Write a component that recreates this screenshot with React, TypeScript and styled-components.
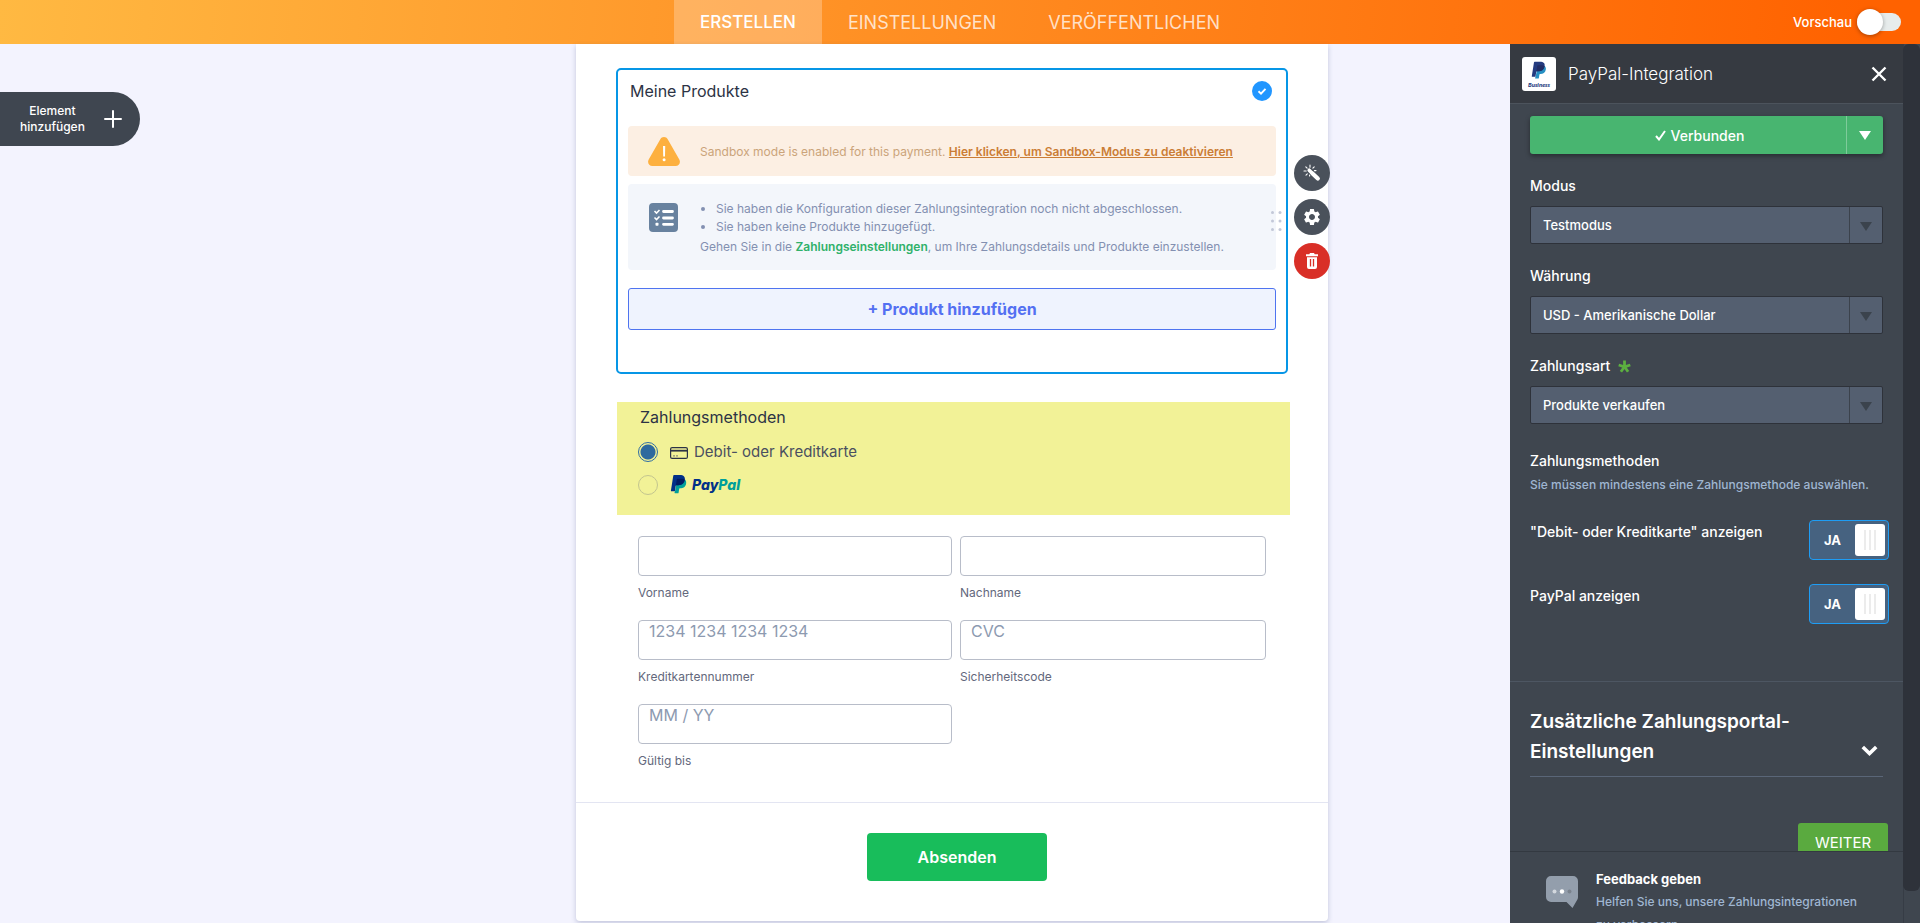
import React, { useState } from 'react';
import styled, { createGlobalStyle, css } from 'styled-components';
import { MdSettings } from 'react-icons/md';

const ui = '"Inter", "Liberation Sans", sans-serif';

const GlobalStyle = createGlobalStyle`
  *, *::before, *::after { box-sizing: border-box; }
  body { margin: 0; font-family: ${ui}; background: #f3f3fe; }
  button, input, select { font-family: inherit; margin: 0; }
  button { cursor: pointer; border: 0; padding: 0; }
`;

const Page = styled.div`
  display: flex;
  flex-direction: column;
  height: 100vh;
  overflow: hidden;
`;

/* ---------- top bar ---------- */

const TopBar = styled.header`
  display: grid;
  grid-template-columns: 1fr auto 1fr;
  height: 44px;
  flex: none;
  background: linear-gradient(95deg, #ffb942 0%, #ff9a2c 34%, #ff6200 97%);
`;

const Tabs = styled.nav`
  grid-column: 2;
  display: flex;
`;

const Tab = styled.a<{ $active?: boolean }>`
  display: flex;
  align-items: center;
  padding: 0 26px;
  font-size: ${(p) => (p.$active ? '17px' : '18px')};
  text-decoration: none;
  color: ${(p) => (p.$active ? '#fff' : 'rgba(255, 255, 255, 0.75)')};
  background: ${(p) => (p.$active ? 'rgba(255, 255, 255, 0.25)' : 'transparent')};
  font-weight: ${(p) => (p.$active ? 500 : 400)};
`;

const Preview = styled.label`
  justify-self: end;
  display: flex;
  align-items: center;
  gap: 5px;
  padding-right: 19px;
  color: #fff;
  font-size: 13px;
  font-weight: 500;
`;

const PreviewSwitch = styled.input`
  appearance: none;
  position: relative;
  width: 44px;
  height: 18px;
  border-radius: 9px;
  background: #e7ecec;
  &::before {
    content: '';
    position: absolute;
    left: 0;
    top: -4px;
    width: 26px;
    height: 26px;
    border-radius: 50%;
    background: #fff;
    box-shadow: 0 1px 4px rgba(0, 0, 0, 0.35);
  }
  &:checked::before { left: 18px; }
`;

/* ---------- workspace ---------- */

const Workspace = styled.div`
  display: grid;
  grid-template-columns: minmax(0, 1fr) minmax(0, 752px) minmax(0, 1fr);
  flex: 1;
  min-height: 0;
  padding-right: 16px;
`;

const LeftRail = styled.div`
  padding-top: 48px;
`;

const AddElement = styled.button`
  display: flex;
  align-items: center;
  gap: 19px;
  height: 54px;
  padding: 0 18px 0 20px;
  border-radius: 0 27px 27px 0;
  background: #3f4650;
  color: #fff;
  font-size: 12px;
  line-height: 16px;
  font-weight: 500;
  text-align: center;
`;

const FormCard = styled.main`
  align-self: start;
  background: #fff;
  border-radius: 0 0 4px 4px;
  box-shadow: 0 2px 5px rgba(80, 90, 140, 0.3);
`;

const FormBody = styled.div`
  padding: 24px 40px 33px;
`;

const ProductBox = styled.section`
  position: relative;
  padding: 11px 10px 42px;
  border: 2px solid #0796e6;
  border-radius: 5px;
`;

const BoxHead = styled.div`
  display: flex;
  align-items: center;
  justify-content: space-between;
  padding: 0 4px 0 2px;
  margin-bottom: 25px;
`;

const QuestionTitle = styled.h2`
  margin: 0;
  font-size: 16px;
  line-height: 20px;
  font-weight: 400;
  color: #2c3345;
`;

const Notice = styled.div<{ $tone: 'warning' | 'info' }>`
  display: flex;
  gap: 20px;
  border-radius: 4px;
  font-size: 12px;
  line-height: 18px;
  & > svg { flex: none; }
  ${(p) =>
    p.$tone === 'warning'
      ? css`
          align-items: center;
          padding: 11px 20px 10px;
          margin-bottom: 8px;
          background: #fcefe3;
          color: #cba47a;
        `
      : css`
          padding: 16px 20px 14px;
          margin-bottom: 18px;
          background: #f3f6fb;
          color: #8390b1;
          & > svg { margin-top: 3px; }
        `}
`;

const SandboxLink = styled.a`
  font-weight: 600;
  color: #cb7d35;
`;

const SettingsLink = styled.a`
  font-weight: 600;
  color: #2fb16a;
  text-decoration: none;
`;

const NoticeList = styled.ul`
  margin: 0 0 2px;
  padding-left: 16px;
`;

const NoticeText = styled.p`
  margin: 0;
`;

const AddProduct = styled.button`
  width: 100%;
  height: 42px;
  border: 1px solid #4f74f0;
  border-radius: 3px;
  background: #eff3fe;
  color: #5470f2;
  font-size: 16px;
  font-weight: 700;
`;

const DragHandle = styled.svg`
  position: absolute;
  right: 4px;
  top: 141px;
`;

const Tools = styled.div`
  position: absolute;
  left: calc(100% + 8px);
  top: 85px;
  display: flex;
  flex-direction: column;
  gap: 8px;
`;

const ToolButton = styled.button<{ $danger?: boolean }>`
  display: flex;
  align-items: center;
  justify-content: center;
  width: 36px;
  height: 36px;
  border-radius: 50%;
  color: #fff;
  background: ${(p) => (p.$danger ? '#d92f27' : '#4a515b')};
`;

const Methods = styled.fieldset`
  display: flex;
  flex-direction: column;
  gap: 13px;
  margin: 28px -2px 21px 1px;
  padding: 5px 21px 20px;
  border: 0;
  background: #f2f297;
`;

const MethodsTitle = styled(QuestionTitle)`
  padding-left: 2px;
  margin-bottom: 2px;
`;

const Method = styled.label`
  display: flex;
  align-items: center;
  height: 20px;
  font-size: 15px;
  line-height: 20px;
  color: #4a4f60;
`;

const Radio = styled.input`
  appearance: none;
  width: 20px;
  height: 20px;
  margin-right: 12px;
  border: 1px solid #c3c58f;
  border-radius: 50%;
  &:checked {
    border-color: #2e6da4;
    background: radial-gradient(circle, #2e6a9e 7px, transparent 8px);
  }
`;

const CardIcon = styled.svg`
  margin: 2px 6px 0 0;
`;

const Fields = styled.div`
  display: grid;
  grid-template-columns: 314fr 306fr;
  gap: 19px 8px;
  padding: 0 22px;
`;

const Field = styled.div`
  display: flex;
  flex-direction: column;
  gap: 9px;
`;

const FieldInput = styled.input`
  width: 100%;
  height: 40px;
  padding: 0 10px 18px;
  border: 1px solid #b8bdc9;
  border-radius: 4px;
  background: #fff;
  color: #2c3345;
  font-size: 16px;
  &::placeholder { color: #8d9ab0; opacity: 1; }
`;

const FieldLabel = styled.label`
  font-size: 12px;
  line-height: 16px;
  color: #63687c;
`;

const FormFooter = styled.div`
  display: flex;
  justify-content: center;
  padding: 30px 0 40px 10px;
  border-top: 1px solid #e3e5f2;
`;

const Submit = styled.button`
  width: 180px;
  height: 48px;
  border-radius: 4px;
  background: #18bd5b;
  color: #fff;
  font-size: 16px;
  font-weight: 600;
`;

/* ---------- settings panel ---------- */

const Panel = styled.aside`
  justify-self: end;
  display: flex;
  width: 410px;
  min-height: 0;
  margin-right: -16px;
  background: #3f464f;
  color: #fff;
`;

const PanelMain = styled.div`
  display: flex;
  flex-direction: column;
  flex: 1;
  min-width: 0;
`;

const ScrollTrack = styled.div`
  width: 17px;
  padding-bottom: 32px;
  border-left: 1px solid #363c45;
`;

const ScrollThumb = styled.div`
  height: 100%;
  margin-left: -1px;
  border-radius: 6px;
  background: #2e323a;
`;

const PanelHead = styled.header`
  display: flex;
  align-items: center;
  flex: none;
  height: 60px;
  padding: 0 16px 0 12px;
  border-bottom: 1px solid #4c535c;
  background: #363a41;
`;

const Badge = styled.svg`
  margin-right: 12px;
`;

const PanelTitle = styled.h1`
  flex: 1;
  margin: 0;
  font-size: 17px;
  font-weight: 300;
`;

const CloseButton = styled.button`
  display: flex;
  background: none;
  color: #fff;
`;

const PanelScroll = styled.div`
  flex: 1;
  min-height: 0;
  overflow: hidden;
`;

const Section = styled.section<{ $divided?: boolean }>`
  padding: 12px 20px 57px;
  ${(p) =>
    p.$divided &&
    css`
      padding: 25px 20px;
      border-top: 1px solid #4d5662;
    `}
`;

const Connected = styled.div`
  display: flex;
  height: 38px;
  border-radius: 3px;
  overflow: hidden;
  background: #48b570;
  box-shadow: 0 2px 5px rgba(0, 0, 0, 0.4);
`;

const ConnectedMain = styled.button`
  display: flex;
  align-items: center;
  justify-content: center;
  gap: 5px;
  flex: 1;
  padding-left: 23px;
  background: none;
  color: #fff;
  font-size: 14px;
  font-weight: 500;
`;

const ConnectedMore = styled.button`
  display: flex;
  align-items: center;
  justify-content: center;
  width: 37px;
  border-left: 1px solid #7fcb9b;
  background: none;
  color: #fff;
`;

const SelectField = styled.div`
  margin-top: 22px;
`;

const PanelLabel = styled.label`
  display: flex;
  align-items: center;
  gap: 8px;
  font-size: 14px;
  line-height: 20px;
  font-weight: 500;
`;

const SelectWrap = styled.div`
  position: relative;
  margin-top: 10px;
`;

const Select = styled.select`
  appearance: none;
  width: 100%;
  height: 38px;
  padding: 0 44px 0 12px;
  border: 1px solid #2e323a;
  border-radius: 2px;
  background: #545f70;
  color: #fff;
  font-size: 13px;
  font-weight: 500;
`;

const SelectArrow = styled.span`
  position: absolute;
  top: 1px;
  right: 1px;
  bottom: 1px;
  display: flex;
  align-items: center;
  justify-content: center;
  width: 33px;
  padding-top: 2px;
  border-left: 1px solid #3b424c;
  color: #3b434d;
  pointer-events: none;
`;

const GroupTitle = styled.h2`
  margin: 27px 0 0;
  font-size: 14px;
  line-height: 20px;
  font-weight: 500;
`;

const Hint = styled.p`
  margin: 5px 0 26px;
  font-size: 12px;
  line-height: 18px;
  font-weight: 500;
  color: #9fb6d2;
`;

const SwitchRow = styled.label`
  display: flex;
  align-items: flex-start;
  justify-content: space-between;
  margin-right: -6px;
  font-size: 14px;
  line-height: 24px;
  font-weight: 500;
  & + & { margin-top: 24px; }
`;

const SwitchBox = styled.span`
  position: relative;
  display: flex;
  align-items: center;
  justify-content: space-between;
  width: 80px;
  height: 40px;
  padding: 0 3px 0 14px;
  border: 1px solid #1e9df5;
  border-radius: 4px;
  background: #466280;
  font-size: 13px;
  font-weight: 700;
`;

const SwitchInput = styled.input`
  position: absolute;
  inset: 0;
  width: 100%;
  height: 100%;
  opacity: 0;
`;

const SwitchKnob = styled.span`
  display: flex;
  align-items: center;
  justify-content: center;
  gap: 3px;
  width: 30px;
  height: 32px;
  border-radius: 3px;
  background: #fff;
`;

const Grip = styled.i`
  width: 2px;
  height: 20px;
  background: #ececec;
`;

const Expander = styled.button`
  display: flex;
  align-items: flex-end;
  justify-content: space-between;
  width: 100%;
  padding: 0 5px 9px 0;
  border-bottom: 1px solid #5a6678;
  background: none;
  color: #fff;
  text-align: left;
  font-size: 19px;
  line-height: 30px;
  font-weight: 600;
  & > svg { flex: none; margin-bottom: 11px; }
`;

const Next = styled.button`
  display: block;
  width: 90px;
  height: 38px;
  margin: 46px -5px 0 auto;
  border-radius: 3px;
  background: #5aaa3f;
  color: #fff;
  font-size: 15px;
`;

const Feedback = styled.footer`
  display: flex;
  flex: none;
  gap: 18px;
  height: 72px;
  overflow: hidden;
  padding: 16px 36px 0 36px;
  border-top: 1px solid #333941;
  & > svg { flex: none; margin-top: 8px; }
`;

const FeedbackTitle = styled.h3`
  margin: 0;
  font-size: 13px;
  line-height: 22px;
  font-weight: 700;
`;

const FeedbackText = styled.p`
  margin: 0;
  font-size: 12px;
  line-height: 23px;
  font-weight: 500;
  color: #9fb6d2;
`;

/* ---------- drawings ---------- */

const P_FRONT =
  'M7.076 21.337H2.47a.641.641 0 0 1-.633-.74L4.944.901C5.026.382 5.474 0 5.998 0h7.46c2.57 0 4.578.543 5.69 1.81 1.01 1.15 1.304 2.42 1.012 4.287-.023.143-.047.288-.077.437-.983 5.05-4.349 6.797-8.647 6.797h-2.19c-.524 0-.968.382-1.05.9l-1.12 7.106z';
const P_BACK =
  'M21.222 6.917a3.35 3.35 0 0 0-1.1-.9L10 8 7.076 22.08h-.24l-.24 1.273a.56.56 0 0 0 .554.647h3.882c.46 0 .85-.334.922-.788.06-.26.76-4.852.816-5.09a.932.932 0 0 1 .923-.788h.58c3.76 0 6.705-1.528 7.565-5.946.36-1.847.174-3.388-.777-4.471z';
const P_OVERLAP =
  'M9.6 5.6c.1-.5.5-.8 1-.8h5.9c1.4 0 2.700.4 3.600 1.400-.983 5.400-4.349 7.131-8.647 7.131h-2.190c-.4 0-.7.2-.9.500z';

function PayPalMark({ back, front, mid }: { back: string; front: string; mid: string }) {
  return (
    <>
      <path d={P_BACK} fill={back} />
      <path d={P_FRONT} fill={front} />
      <path d={P_OVERLAP} fill={mid} />
    </>
  );
}

function PayPalLogo() {
  return (
    <svg width="72" height="20" viewBox="0 0 72 20" role="img" aria-label="PayPal">
      <g transform="translate(-.5 0) scale(.76)">
        <PayPalMark back="#009f9b" front="#013088" mid="#001c64" />
      </g>
      <text x="22" y="15" fontFamily="Inter, sans-serif" fontWeight="800" fontStyle="italic" fontSize="14" fill="#013088">
        Pay<tspan fill="#009f9b">Pal</tspan>
      </text>
    </svg>
  );
}

function BusinessBadge() {
  return (
    <Badge width="34" height="34" viewBox="0 0 34 34" aria-hidden="true">
      <rect width="34" height="34" rx="3" fill="#fff" />
      <g transform="translate(8.500 4.800) scale(.7)">
        <PayPalMark back="#2790c3" front="#253b80" mid="#222d65" />
      </g>
      <text x="17" y="30" textAnchor="middle" fontFamily="Lato, sans-serif" fontWeight="900" fontStyle="italic" fontSize="6" fill="#253b80">
        Business
      </text>
    </Badge>
  );
}

function DownTriangle() {
  return (
    <svg width="12" height="9" viewBox="0 0 12 9" aria-hidden="true">
      <path d="M0 0h12L6 9z" fill="currentColor" />
    </svg>
  );
}

function WarningIcon() {
  return (
    <svg width="32" height="29" viewBox="0 0 32 29" aria-hidden="true">
      <path d="M16 0c1.600 0 2.900.8 3.700 2.200l11.600 20.200c1.700 3-.3 6.600-3.700 6.600H4.400C1 29-1 25.400.7 22.400L12.300 2.200C13.100.8 14.400 0 16 0z" fill="#fdb03f" />
      <path d="M15 9h2.200l-.2 10.500h-1.800z" fill="#fff" />
      <circle cx="16.100" cy="22.800" r="1.500" fill="#fff" />
    </svg>
  );
}

function ChecklistIcon() {
  return (
    <svg width="32" height="29" viewBox="0 0 32 29" aria-hidden="true">
      <rect x="1" width="29" height="29" rx="4" fill="#68829f" />
      <path d="M6.500 8l2 2 3-3M6.500 14.500l2 2 3-3" fill="none" stroke="#fff" strokeWidth="1.600" />
      <rect x="7.500" y="19.700" width="3" height="3" rx=".8" fill="#fff" />
      <path d="M15.500 8.500h9M15.500 15h9M15.500 21.300h9" stroke="#fff" strokeWidth="2.800" strokeLinecap="round" />
    </svg>
  );
}

function WandIcon() {
  return (
    <svg width="18" height="18" viewBox="0 0 18 18" aria-hidden="true">
      <path d="M6.200 6.200l2.500 2.500" stroke="#fff" strokeWidth="3.600" strokeLinecap="round" />
      <path d="M9.500 9.500l5.300 5" stroke="#fff" strokeWidth="4.200" strokeLinecap="round" />
      <path d="M7 1v2.200M2.800 2.800l1.300 1.300M1 7h2.200M3 11.200l1.300-1.300M11.200 2.800L9.900 4.100M13 6.600h-1.600M6.600 12v-1" stroke="#fff" strokeWidth="1.100" strokeLinecap="round" />
    </svg>
  );
}

function TrashIcon() {
  return (
    <svg width="12" height="16" viewBox="0 0 12 16" aria-hidden="true">
      <path d="M4 0h4l.7 1.300H12v1.900H0V1.300h3.300zM1 4.300h10v9.700a2 2 0 0 1-2 2H3a2 2 0 0 1-2-2z" fill="#fff" />
      <path d="M4.500 6v7.500M7.500 6v7.500" stroke="#d92f27" strokeWidth="1.300" />
    </svg>
  );
}

/* ---------- parts ---------- */

function TextField({ id, label, placeholder }: { id: string; label: string; placeholder?: string }) {
  return (
    <Field>
      <FieldInput id={id} type="text" placeholder={placeholder} />
      <FieldLabel htmlFor={id}>{label}</FieldLabel>
    </Field>
  );
}

function PanelSelect({ id, label, value, required }: { id: string; label: string; value: string; required?: boolean }) {
  return (
    <SelectField>
      <PanelLabel htmlFor={id}>
        {label}
        {required && (
          <svg width="13" height="13" viewBox="0 0 13 13" aria-hidden="true">
            <path d="M6.500 6.800V.5M6.500 6.800L.7 5M6.500 6.800l5.800-1.800M6.500 6.800l-3.600 5M6.500 6.800l3.600 5" stroke="#5cb040" strokeWidth="2.800" />
          </svg>
        )}
      </PanelLabel>
      <SelectWrap>
        <Select id={id} defaultValue={value}>
          <option>{value}</option>
        </Select>
        <SelectArrow>
          <DownTriangle />
        </SelectArrow>
      </SelectWrap>
    </SelectField>
  );
}

function YesSwitch({ label }: { label: string }) {
  return (
    <SwitchRow>
      {label}
      <SwitchBox>
        <SwitchInput type="checkbox" defaultChecked aria-label={label} />
        JA
        <SwitchKnob>
          <Grip />
          <Grip />
          <Grip />
        </SwitchKnob>
      </SwitchBox>
    </SwitchRow>
  );
}

export default function App() {
  const [method, setMethod] = useState('card');
  return (
    <Page>
      <GlobalStyle />
      <TopBar>
        <Tabs>
          <Tab href="#build" $active>ERSTELLEN</Tab>
          <Tab href="#settings">EINSTELLUNGEN</Tab>
          <Tab href="#publish">VERÖFFENTLICHEN</Tab>
        </Tabs>
        <Preview>
          Vorschau
          <PreviewSwitch type="checkbox" />
        </Preview>
      </TopBar>

      <Workspace>
        <LeftRail>
          <AddElement type="button">
            <span>Element<br />hinzufügen</span>
            <svg width="18" height="18" viewBox="0 0 18 18" aria-hidden="true">
              <path d="M9 1v16M1 9h16" stroke="#fff" strokeWidth="2" strokeLinecap="round" />
            </svg>
          </AddElement>
        </LeftRail>

        <FormCard>
          <FormBody>
            <ProductBox>
              <BoxHead>
                <QuestionTitle>Meine Produkte</QuestionTitle>
                <svg width="20" height="20" viewBox="0 0 20 20" aria-hidden="true">
                  <circle cx="10" cy="10" r="10" fill="#2196ff" />
                  <path d="M6.500 10.300l2.500 2.400 4.500-4.900" fill="none" stroke="#fff" strokeWidth="1.900" />
                </svg>
              </BoxHead>
              <Notice $tone="warning">
                <WarningIcon />
                <NoticeText>
                  Sandbox mode is enabled for this payment.{' '}
                  <SandboxLink href="#sandbox">Hier klicken, um Sandbox-Modus zu deaktivieren</SandboxLink>
                </NoticeText>
              </Notice>
              <Notice $tone="info">
                <ChecklistIcon />
                <div>
                  <NoticeList>
                    <li>Sie haben die Konfiguration dieser Zahlungsintegration noch nicht abgeschlossen.</li>
                    <li>Sie haben keine Produkte hinzugefügt.</li>
                  </NoticeList>
                  <NoticeText>
                    Gehen Sie in die <SettingsLink href="#payment">Zahlungseinstellungen</SettingsLink>, um Ihre
                    Zahlungsdetails und Produkte einzustellen.
                  </NoticeText>
                </div>
              </Notice>
              <AddProduct type="button">+ Produkt hinzufügen</AddProduct>
              <DragHandle width="11" height="20" viewBox="0 0 11 20" fill="#c3c8d8" aria-hidden="true">
                {[1.5, 10, 18.5].map((y) => (
                  <React.Fragment key={y}>
                    <circle cx="1.5" cy={y} r="1.5" />
                    <circle cx="9" cy={y} r="1.5" />
                  </React.Fragment>
                ))}
              </DragHandle>
              <Tools>
                <ToolButton type="button" aria-label="Assistent"><WandIcon /></ToolButton>
                <ToolButton type="button" aria-label="Eigenschaften"><MdSettings size={20} /></ToolButton>
                <ToolButton type="button" aria-label="Löschen" $danger><TrashIcon /></ToolButton>
              </Tools>
            </ProductBox>

            <Methods>
              <MethodsTitle>Zahlungsmethoden</MethodsTitle>
              <Method>
                <Radio type="radio" name="method" checked={method === 'card'} onChange={() => setMethod('card')} />
                <CardIcon width="18" height="12" viewBox="0 0 18 12" aria-hidden="true">
                  <rect x=".6" y=".6" width="16.800" height="10.800" rx="1.500" fill="none" stroke="#2c3345" strokeWidth="1.200" />
                  <path d="M0 3.700h18" stroke="#2c3345" strokeWidth="1.800" />
                  <path d="M3 8.800h2M6 8.800h2" stroke="#8a8c78" strokeWidth="1.200" />
                </CardIcon>
                Debit- oder Kreditkarte
              </Method>
              <Method>
                <Radio type="radio" name="method" checked={method === 'paypal'} onChange={() => setMethod('paypal')} />
                <PayPalLogo />
              </Method>
            </Methods>

            <Fields>
              <TextField id="first" label="Vorname" />
              <TextField id="last" label="Nachname" />
              <TextField id="number" label="Kreditkartennummer" placeholder="1234 1234 1234 1234" />
              <TextField id="cvc" label="Sicherheitscode" placeholder="CVC" />
              <TextField id="expiry" label="Gültig bis" placeholder="MM / YY" />
            </Fields>
          </FormBody>
          <FormFooter>
            <Submit type="button">Absenden</Submit>
          </FormFooter>
        </FormCard>

        <Panel>
          <PanelMain>
            <PanelHead>
              <BusinessBadge />
              <PanelTitle>PayPal-Integration</PanelTitle>
              <CloseButton type="button" aria-label="Schließen">
                <svg width="16" height="16" viewBox="0 0 16 16" aria-hidden="true">
                  <path d="M1.500 1.500l13 13M14.500 1.500l-13 13" stroke="currentColor" strokeWidth="2.400" />
                </svg>
              </CloseButton>
            </PanelHead>
            <PanelScroll>
              <Section>
                <Connected>
                  <ConnectedMain type="button">
                    <svg width="11" height="11" viewBox="0 0 11 11" aria-hidden="true">
                      <path d="M1 6l3 3.500L10 1" fill="none" stroke="currentColor" strokeWidth="2" />
                    </svg>
                    Verbunden
                  </ConnectedMain>
                  <ConnectedMore type="button" aria-label="Weitere Optionen">
                    <DownTriangle />
                  </ConnectedMore>
                </Connected>
                <PanelSelect id="mode" label="Modus" value="Testmodus" />
                <PanelSelect id="currency" label="Währung" value="USD - Amerikanische Dollar" />
                <PanelSelect id="kind" label="Zahlungsart" value="Produkte verkaufen" required />
                <GroupTitle>Zahlungsmethoden</GroupTitle>
                <Hint>Sie müssen mindestens eine Zahlungsmethode auswählen.</Hint>
                <YesSwitch label={'"Debit- oder Kreditkarte" anzeigen'} />
                <YesSwitch label="PayPal anzeigen" />
              </Section>
              <Section $divided>
                <Expander type="button">
                  <span>Zusätzliche Zahlungsportal-<br />Einstellungen</span>
                  <svg width="17" height="11" viewBox="0 0 17 11" aria-hidden="true">
                    <path d="M1.800 2l6.700 6.500L15.200 2" fill="none" stroke="currentColor" strokeWidth="3.600" />
                  </svg>
                </Expander>
                <Next type="button">WEITER</Next>
              </Section>
            </PanelScroll>
            <Feedback>
              <svg width="32" height="32" viewBox="0 0 32 32" aria-hidden="true">
                <path d="M5 0h22a5 5 0 0 1 5 5v16a5 5 0 0 1-.6 2.500L26.500 32 20.500 26H5a5 5 0 0 1-5-5V5a5 5 0 0 1 5-5z" fill="#939eac" />
                <circle cx="8.500" cy="15.500" r="2" fill="#d3d8de" />
                <circle cx="16" cy="15.500" r="2.200" fill="#fff" />
                <circle cx="23.500" cy="15.500" r="2" fill="#7a828d" />
              </svg>
              <div>
                <FeedbackTitle>Feedback geben</FeedbackTitle>
                <FeedbackText>Helfen Sie uns, unsere Zahlungsintegrationen zu verbessern.</FeedbackText>
              </div>
            </Feedback>
          </PanelMain>
          <ScrollTrack>
            <ScrollThumb />
          </ScrollTrack>
        </Panel>
      </Workspace>
    </Page>
  );
}
